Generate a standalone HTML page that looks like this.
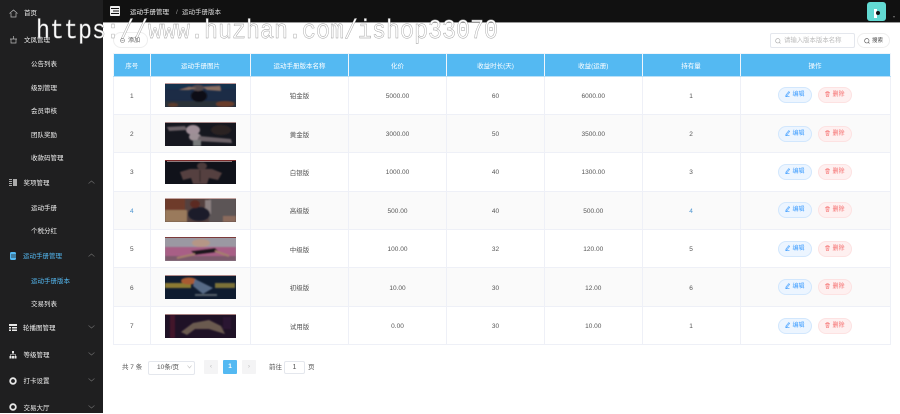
<!DOCTYPE html>
<html lang="zh"><head><meta charset="utf-8"><title>运动手册版本</title>
<style>
*{box-sizing:border-box;margin:0;padding:0}
html,body{width:900px;height:413px;overflow:hidden;background:#fff;font-family:"Liberation Sans","Noto Sans CJK SC",sans-serif;font-size:6.5px;color:#555}
.a{position:absolute;white-space:nowrap;line-height:10px}
#side{position:absolute;left:0;top:0;width:103px;height:413px;background:#1f1f20}
#side .a{color:#f0f0f0;margin-top:1px}
#side svg{position:absolute}
#head{position:absolute;left:103px;top:0;width:797px;height:23px;background:#111;border-bottom:1px solid #999}
table{position:absolute;left:112.5px;top:52.5px;width:777.5px;border-collapse:collapse;table-layout:fixed}
th{height:23px;background:#54b9f2;color:#fff;font-weight:normal;border:1px solid #f0f5fb;border-bottom:1px solid #b9e0f8;text-align:center;font-size:6.5px}
td{height:38.4px;border:1px solid #eef0f7;text-align:center;font-size:6.5px;color:#555;padding:0}
td:nth-child(1),td:nth-child(4),td:nth-child(5),td:nth-child(6),td:nth-child(7){padding-top:2px}
tr:nth-child(even) td{background:#fafafa}
td svg.t{display:block;margin:0 auto;width:71px;height:24px}
.b{display:inline-block;width:34.5px;height:16px;line-height:14px;border-radius:8px;font-size:6px;vertical-align:middle;white-space:nowrap}
.b svg{width:5px;height:6px;vertical-align:-1px;margin-right:2px}
.e{background:#ecf5ff;border:1px solid #d2e7fd;color:#409eff;margin-right:5.5px}
.d{background:#fef0f0;border:1px solid #fde2e2;color:#f56c6c}
.box{position:absolute;border:1px solid #e4e7ed;background:#fff}
.wm{position:absolute;left:36px;top:17px;font-family:"Liberation Mono",monospace;font-size:27px;line-height:30px;color:#fff;-webkit-text-stroke:.45px #9a9a9a;white-space:nowrap;transform:scaleX(.864);transform-origin:0 0}
</style></head><body>
<svg width="0" height="0" style="position:absolute"><defs>
<filter id="f" x="-10%" y="-10%" width="120%" height="120%"><feGaussianBlur stdDeviation=".7"/></filter>
<symbol id="pen" viewBox="0 0 5 6"><path d="M3.800.6 1 4 .8 5.300 2 4.800 4.600 1.400zM.5 5.700h4" fill="none" stroke="#409eff" stroke-width=".6"/></symbol>
<symbol id="bin" viewBox="0 0 5 6"><path d="M.3 1.300h4.400M1.800 1.200V.5h1.400v.7M1 1.500l.3 4h2.400l.3-4M2.500 2.500v2" fill="none" stroke="#f56c6c" stroke-width=".6"/></symbol>
</defs></svg>
<div id="side">
<svg style="left:9px;top:9px" width="9" height="9" viewBox="0 0 9 9" fill="none" stroke="#bbb" stroke-width=".7"><path d="M.5 4.500 4.500 1l4 3.500M2 4v4h5V4"/></svg>
<div class="a" style="left:24px;top:8px">首页</div>
<svg style="left:9px;top:35px" width="9" height="9" viewBox="0 0 9 9" fill="none" stroke="#bbb" stroke-width=".7"><path d="M1 4h7M2 4v4h5V4M4.500 1v3"/></svg>
<div class="a" style="left:24px;top:35px">文凤管理</div>
<div class="a" style="left:31px;top:59px">公告列表</div>
<div class="a" style="left:31px;top:83px">级别管理</div>
<div class="a" style="left:31px;top:106px">会员审核</div>
<div class="a" style="left:31px;top:130px">团队奖励</div>
<div class="a" style="left:31px;top:153px">收款码管理</div>
<svg style="left:9px;top:179px" width="8" height="8" viewBox="0 0 8 8" fill="#aaa"><path d="M0 0h3v1H0zM0 2h3v1H0zM0 4h3v1H0zM0 6h3v1H0zM4 0h4v7H4z"/></svg>
<div class="a" style="left:23.500px;top:178px">奖项管理</div>
<svg style="left:88px;top:180px" width="7" height="4" viewBox="0 0 7 4" fill="none" stroke="#666" stroke-width=".7"><path d="M.5 3.500 3.500 1l3 2.500"/></svg>
<div class="a" style="left:31px;top:203px">运动手册</div>
<div class="a" style="left:31px;top:226px">个税分红</div>
<svg style="left:8.500px;top:252px" width="8" height="8" viewBox="0 0 8 8"><rect x="1" y="0" width="6" height="8" rx="1.500" fill="#54b9f2"/><path d="M2 3h5M2 5h5" stroke="#1f1f20" stroke-width=".7"/></svg>
<div class="a" style="left:23px;top:251px;color:#54b9f2">运动手册管理</div>
<svg style="left:88px;top:253px" width="7" height="4" viewBox="0 0 7 4" fill="none" stroke="#666" stroke-width=".7"><path d="M.5 3.500 3.500 1l3 2.500"/></svg>
<div class="a" style="left:31px;top:276px;color:#54b9f2">运动手册版本</div>
<div class="a" style="left:31px;top:299px">交易列表</div>
<svg style="left:9px;top:324px" width="8" height="8" viewBox="0 0 8 8" fill="#e8e8e8"><path d="M0 0h8v2H0zM0 3h2v1.500H0zM3 3h5v1.500H3zM0 5.500h2V7H0zM3 5.500h5V7H3z"/></svg>
<div class="a" style="left:23px;top:323px">轮播图管理</div>
<svg style="left:88px;top:325px" width="7" height="4" viewBox="0 0 7 4" fill="none" stroke="#666" stroke-width=".7"><path d="M.5.500 3.500 3l3-2.500"/></svg>
<svg style="left:8.500px;top:351px" width="8" height="8" viewBox="0 0 8 8" fill="#e8e8e8"><path d="M3 0h2v2.500H3zM.5 5h2v2.500h-2zM3 5h2v2.500H3zM5.500 5h2v2.500h-2z"/><path d="M1.500 5V3.500h5V5" fill="none" stroke="#e8e8e8" stroke-width=".6"/></svg>
<div class="a" style="left:23.500px;top:350px">等级管理</div>
<svg style="left:88px;top:351.500px" width="7" height="4" viewBox="0 0 7 4" fill="none" stroke="#666" stroke-width=".7"><path d="M.5.500 3.500 3l3-2.500"/></svg>
<svg style="left:8.500px;top:377px" width="8" height="8" viewBox="0 0 8 8"><circle cx="4" cy="4" r="2.800" fill="none" stroke="#e8e8e8" stroke-width="1.800"/></svg>
<div class="a" style="left:23.500px;top:376px">打卡设置</div>
<svg style="left:88px;top:378px" width="7" height="4" viewBox="0 0 7 4" fill="none" stroke="#666" stroke-width=".7"><path d="M.5.500 3.500 3l3-2.500"/></svg>
<svg style="left:8.500px;top:403px" width="8" height="8" viewBox="0 0 8 8"><circle cx="4" cy="4" r="2.800" fill="none" stroke="#e8e8e8" stroke-width="1.800"/></svg>
<div class="a" style="left:23.500px;top:403px">交易大厅</div>
<svg style="left:88px;top:405px" width="7" height="4" viewBox="0 0 7 4" fill="none" stroke="#666" stroke-width=".7"><path d="M.5.500 3.500 3l3-2.500"/></svg>
</div>

<div id="head">
<svg style="position:absolute;left:7px;top:6px" width="10" height="10" viewBox="0 0 10 10"><rect width="10" height="10" rx="1" fill="#eee"/><path d="M1 2.500h8M3 5h6M1 7.500h8" stroke="#111"/></svg>
<div class="a" style="left:27px;top:8px;color:#eee">运动手册管理</div>
<div class="a" style="left:73px;top:8px;color:#999">/</div>
<div class="a" style="left:79px;top:8px;color:#ddd">运动手册版本</div>
<div style="position:absolute;left:764px;top:2px;width:19px;height:19px;border-radius:3px;background:#62d9d2"></div>
<div style="position:absolute;left:771px;top:9px;width:3px;height:9px;background:#fff"></div>
<div style="position:absolute;left:773px;top:11px;width:4px;height:4px;border-radius:50%;background:#111"></div>
<div style="position:absolute;left:790px;top:16px;border:1.500px solid transparent;border-top:2px solid #777"></div>
</div>

<div class="box" style="left:113px;top:32px;width:35px;height:16px;border-radius:8px;border-color:#eee"></div>
<svg style="position:absolute;left:120px;top:37.500px" width="5" height="5" viewBox="0 0 5 5" fill="none" stroke="#777" stroke-width=".6"><circle cx="2.500" cy="2.500" r="2"/><path d="M1.500 2.500h2"/></svg>
<div class="a" style="left:128px;top:36px;color:#555;font-size:6px">添加</div>

<div class="box" style="left:770px;top:33px;width:85px;height:15px;border-radius:2px"></div>
<svg style="position:absolute;left:775px;top:37.500px" width="6" height="6" viewBox="0 0 6 6" fill="none" stroke="#aaa" stroke-width=".6"><circle cx="2.800" cy="2.800" r="2.200"/><path d="M4.500 4.500 5.500 5.500"/></svg>
<div class="a" style="left:784px;top:35.500px;color:#bbb;font-size:6.400px">请输入版本版本名称</div>
<div class="box" style="left:857px;top:33px;width:33px;height:15px;border-radius:8px;border-color:#eee"></div>
<svg style="position:absolute;left:864px;top:38px" width="6" height="6" viewBox="0 0 6 6" fill="none" stroke="#555" stroke-width=".6"><circle cx="2.800" cy="2.800" r="2.200"/><path d="M4.500 4.500 5.500 5.500"/></svg>
<div class="a" style="left:872px;top:35.500px;color:#444;font-size:5.500px">搜索</div>

<table>
<colgroup><col style="width:37.500px"><col style="width:100px"><col style="width:98px"><col style="width:98px"><col style="width:98px"><col style="width:97.500px"><col style="width:98px"><col style="width:150px"></colgroup>
<thead><tr><th>序号</th><th>运动手册图片</th><th>运动手册版本名称</th><th>化价</th><th>收益时长(天)</th><th>收益(运册)</th><th>持有量</th><th>操作</th></tr></thead>
<tbody>
<tr><td>1</td><td><svg class="t" viewBox="0 0 71 24" preserveAspectRatio="none"><rect width="71" height="24" fill="#1c2c46"/><g filter="url(#f)"><rect width="71" height="6" fill="#17304e"/><rect y="18" width="71" height="6" fill="#2c3038"/><ellipse cx="34" cy="13" rx="8" ry="6" fill="#0e1118"/><ellipse cx="33" cy="5" rx="6" ry="3" fill="#54484c"/><path d="M14 7 24 4 32 5 24 7zM38 4 55 3 56 8 42 7z" fill="#8a6e60"/><ellipse cx="60" cy="21" rx="9" ry="3" fill="#6a3c2c"/><ellipse cx="8" cy="22" rx="5" ry="2" fill="#5a3a2c"/></g><rect width="71" height="1" fill="#c09a9a"/></svg></td><td>铂金版</td><td>5000.00</td><td>60</td><td>6000.00</td><td>1</td><td><span class="b e"><svg><use href="#pen"/></svg>编辑</span><span class="b d"><svg><use href="#bin"/></svg>删除</span></td></tr>
<tr><td>2</td><td><svg class="t" viewBox="0 0 71 24" preserveAspectRatio="none"><rect width="71" height="24" fill="#16171f"/><g filter="url(#f)"><ellipse cx="28" cy="8" rx="7" ry="5" fill="#a08f98"/><ellipse cx="30" cy="15" rx="6" ry="4" fill="#9c8f95"/><path d="M2 5 20 4 22 8 4 9zM34 14 66 17 67 21 32 19z" fill="#6a6166"/><path d="M28 18h8v6h-8z" fill="#77797a"/><ellipse cx="56" cy="8" rx="10" ry="5" fill="#2a2320"/></g><rect width="71" height="1" fill="#a98a8a"/></svg></td><td>黄金版</td><td>3000.00</td><td>50</td><td>3500.00</td><td>2</td><td><span class="b e"><svg><use href="#pen"/></svg>编辑</span><span class="b d"><svg><use href="#bin"/></svg>删除</span></td></tr>
<tr><td>3</td><td><svg class="t" viewBox="0 0 71 24" preserveAspectRatio="none"><rect width="71" height="24" fill="#10121a"/><g filter="url(#f)"><path d="M15 12 25 9h22l10 4-4 7-9-2-2 6H28l-2-6-8 2z" fill="#54403f"/><ellipse cx="37" cy="6" rx="5" ry="3.500" fill="#4c3a3a"/><path d="M35 10v12" stroke="#2a2024"/></g><rect width="71" height="1" fill="#7c2a2a"/><rect y="1" x="2" width="65" height=".7" fill="#c4aaaa"/></svg></td><td>白银版</td><td>1000.00</td><td>40</td><td>1300.00</td><td>3</td><td><span class="b e"><svg><use href="#pen"/></svg>编辑</span><span class="b d"><svg><use href="#bin"/></svg>删除</span></td></tr>
<tr><td style="color:#4b94d0">4</td><td><svg class="t" viewBox="0 0 71 24" preserveAspectRatio="none"><rect width="71" height="24" fill="#54413f"/><g filter="url(#f)"><rect width="20" height="12" fill="#6e3a2c"/><rect y="12" width="22" height="12" fill="#9a7a5c"/><rect x="44" width="27" height="24" fill="#5c5556"/><rect x="40" y="2" width="6" height="14" fill="#8a8080"/><ellipse cx="34" cy="16" rx="11" ry="7" fill="#1d1f2c"/><ellipse cx="30" cy="6" rx="5" ry="4" fill="#5c2c24"/><rect x="58" y="18" width="13" height="6" fill="#8a6a5c"/></g><rect width="71" height="1" fill="#c4a4a0"/></svg></td><td>高级版</td><td>500.00</td><td>40</td><td>500.00</td><td style="color:#4b94d0">4</td><td><span class="b e"><svg><use href="#pen"/></svg>编辑</span><span class="b d"><svg><use href="#bin"/></svg>删除</span></td></tr>
<tr><td>5</td><td><svg class="t" viewBox="0 0 71 24" preserveAspectRatio="none"><rect width="71" height="24" fill="#9b98a2"/><g filter="url(#f)"><rect y="10" width="71" height="9" fill="#a85e86"/><rect y="19" width="71" height="5" fill="#7c5a6c"/><ellipse cx="36" cy="6" rx="9" ry="4" fill="#b59686"/><path d="M26 14 50 11 54 15 30 18z" fill="#1e181e"/><path d="M30 17 12 21M50 14 64 19" stroke="#a57f6c" stroke-width="2"/></g><rect width="71" height="1" fill="#7c3a3a"/></svg></td><td>中级版</td><td>100.00</td><td>32</td><td>120.00</td><td>5</td><td><span class="b e"><svg><use href="#pen"/></svg>编辑</span><span class="b d"><svg><use href="#bin"/></svg>删除</span></td></tr>
<tr><td>6</td><td><svg class="t" viewBox="0 0 71 24" preserveAspectRatio="none"><rect width="71" height="24" fill="#0f1c30"/><g filter="url(#f)"><rect y="8" width="26" height="5" fill="#8c7a30"/><ellipse cx="24" cy="6" rx="8" ry="3.500" fill="#a85a30"/><path d="M30 4 48 13 38 19 28 11z" fill="#566a86"/><rect x="50" y="8" width="20" height="5" fill="#7c7238"/><rect x="30" y="19" width="22" height="2" fill="#55606a"/></g><rect width="71" height="1" fill="#b08a8a"/></svg></td><td>初级版</td><td>10.00</td><td>30</td><td>12.00</td><td>6</td><td><span class="b e"><svg><use href="#pen"/></svg>编辑</span><span class="b d"><svg><use href="#bin"/></svg>删除</span></td></tr>
<tr><td>7</td><td><svg class="t" viewBox="0 0 71 24" preserveAspectRatio="none"><rect width="71" height="24" fill="#1f1226"/><g filter="url(#f)"><path d="M16 18 28 9 44 6 56 12 60 20 44 15 30 15 22 21z" fill="#6a5a50"/><rect x="5" y="1" width="5" height="23" fill="#42182a"/><rect x="58" y="3" width="8" height="12" fill="#2c1632"/></g><rect width="71" height="1" fill="#a58080"/></svg></td><td>试用版</td><td>0.00</td><td>30</td><td>10.00</td><td>1</td><td><span class="b e"><svg><use href="#pen"/></svg>编辑</span><span class="b d"><svg><use href="#bin"/></svg>删除</span></td></tr>
</tbody></table>

<div class="a" style="left:122px;top:363px">共 7 条</div>
<div class="box" style="left:148px;top:360.500px;width:47px;height:14px;border-radius:2px"></div>
<div class="a" style="left:157px;top:363px">10条/页</div>
<svg style="position:absolute;left:187px;top:365px" width="5" height="4" viewBox="0 0 5 4" fill="none" stroke="#bbb" stroke-width=".6"><path d="M.5.500 2.500 3l2-2.500"/></svg>
<div style="position:absolute;left:204px;top:360px;width:14px;height:14px;background:#f4f4f5;border-radius:1px;color:#bbb;text-align:center;line-height:14px">‹</div>
<div style="position:absolute;left:223px;top:360px;width:14px;height:14px;background:#54b9f2;border-radius:1px;color:#fff;text-align:center;line-height:14px;font-weight:bold">1</div>
<div style="position:absolute;left:242px;top:360px;width:14px;height:14px;background:#f4f4f5;border-radius:1px;color:#bbb;text-align:center;line-height:14px">›</div>
<div class="a" style="left:269px;top:363px">前往</div>
<div class="box" style="left:284px;top:361px;width:21px;height:13px;border-radius:2px;text-align:center;line-height:11px;font-size:7px">1</div>
<div class="a" style="left:308px;top:363px">页</div>
<div class="wm">https://www.huzhan.com/ishop33070</div>
</body></html>
